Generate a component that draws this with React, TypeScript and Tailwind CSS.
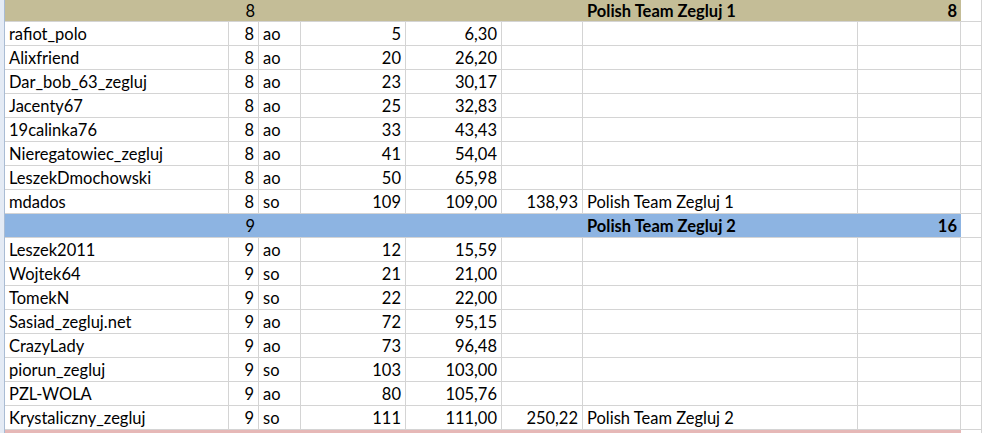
import React from "react";

type Row = [string, string, string, string, string, string?, string?];

const group1: Row[] = [
  ["rafiot_polo", "8", "ao", "5", "6,30"],
  ["Alixfriend", "8", "ao", "20", "26,20"],
  ["Dar_bob_63_zegluj", "8", "ao", "23", "30,17"],
  ["Jacenty67", "8", "ao", "25", "32,83"],
  ["19calinka76", "8", "ao", "33", "43,43"],
  ["Nieregatowiec_zegluj", "8", "ao", "41", "54,04"],
  ["LeszekDmochowski", "8", "ao", "50", "65,98"],
  ["mdados", "8", "so", "109", "109,00", "138,93", "Polish Team Zegluj 1"],
];

const group2: Row[] = [
  ["Leszek2011", "9", "ao", "12", "15,59"],
  ["Wojtek64", "9", "so", "21", "21,00"],
  ["TomekN", "9", "so", "22", "22,00"],
  ["Sasiad_zegluj.net", "9", "ao", "72", "95,15"],
  ["CrazyLady", "9", "ao", "73", "96,48"],
  ["piorun_zegluj", "9", "so", "103", "103,00"],
  ["PZL-WOLA", "9", "ao", "80", "105,76"],
  ["Krystaliczny_zegluj", "9", "so", "111", "111,00", "250,22", "Polish Team Zegluj 2"],
];

const cols = "grid grid-cols-[5px_224px_30px_42px_105px_96px_81px_275px_103px_1fr]";
const cell = "border-r border-b border-[#d4d4d4] px-[4px] pt-[2px] flex items-center whitespace-nowrap overflow-hidden";
const band = "border-b border-[#d4d4d4] px-[4px] pt-[2px] flex items-center whitespace-nowrap";

const Strip = () => <div className="bg-[#e4ebf5] border-r border-[#a9bcd4]" />;

const DataRow = ({ r }: { r: Row }) => (
  <div className={`${cols} h-6`}>
    <Strip />
    <div className={cell}>{r[0]}</div>
    <div className={`${cell} justify-end`}>{r[1]}</div>
    <div className={cell}>{r[2]}</div>
    <div className={`${cell} justify-end`}>{r[3]}</div>
    <div className={`${cell} justify-end`}>{r[4]}</div>
    <div className={`${cell} justify-end`}>{r[5] ?? ""}</div>
    <div className={cell}>{r[6] ?? ""}</div>
    <div className={cell}></div>
    <div className={cell}></div>
  </div>
);

const TeamRow = ({ n, team, pts, bg, h }: { n: string; team: string; pts: string; bg: string; h: string }) => (
  <div className={`${cols} ${h}`}>
    <Strip />
    <div className={`${bg} ${band}`} />
    <div className={`${bg} ${band} justify-end`}>{n}</div>
    <div className={`${bg} ${band}`} />
    <div className={`${bg} ${band}`} />
    <div className={`${bg} ${band}`} />
    <div className={`${bg} ${band}`} />
    <div className={`${bg} ${band} font-bold`}>{team}</div>
    <div className={`${bg} ${band} justify-end font-bold`}>{pts}</div>
    <div className={cell}></div>
  </div>
);

export default function App() {
  return (
    <div
      className="w-[982px] h-[433px] overflow-hidden bg-white text-black text-[16.5px] leading-none"
      style={{ fontFamily: "Lato, 'Liberation Sans', sans-serif" }}
    >
      <TeamRow n="8" team="Polish Team Zegluj 1" pts="8" bg="bg-[#c4bd97]" h="h-[22px]" />
      {group1.map((r, i) => (
        <DataRow key={`a${i}`} r={r} />
      ))}
      <TeamRow n="9" team="Polish Team Zegluj 2" pts="16" bg="bg-[#8db4e2]" h="h-6" />
      {group2.map((r, i) => (
        <DataRow key={`b${i}`} r={r} />
      ))}
      <div className={`${cols} h-6`}>
        <Strip />
        <div className="col-span-8 bg-[#e6b8b7]" />
        <div className={cell}></div>
      </div>
    </div>
  );
}
